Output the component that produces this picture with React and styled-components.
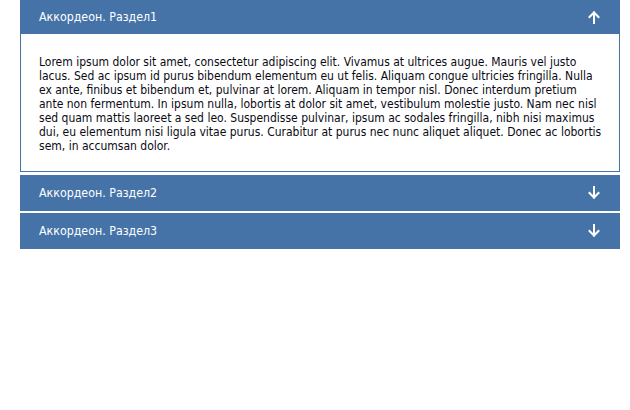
import React, { useState } from "react";
import styled, { createGlobalStyle } from "styled-components";

const GlobalStyle = createGlobalStyle`
  body {
    margin: 0;
    background: #ffffff;
    font-family: "DejaVu Sans Condensed", "DejaVu Sans", sans-serif;
  }
`;

const sections = [
  {
    title: "Аккордеон. Раздел1",
    text: "Lorem ipsum dolor sit amet, consectetur adipiscing elit. Vivamus at ultrices augue. Mauris vel justo lacus. Sed ac ipsum id purus bibendum elementum eu ut felis. Aliquam congue ultricies fringilla. Nulla ex ante, finibus et bibendum et, pulvinar at lorem. Aliquam in tempor nisl. Donec interdum pretium ante non fermentum. In ipsum nulla, lobortis at dolor sit amet, vestibulum molestie justo. Nam nec nisl sed quam mattis laoreet a sed leo. Suspendisse pulvinar, ipsum ac sodales fringilla, nibh nisi maximus dui, eu elementum nisi ligula vitae purus. Curabitur at purus nec nunc aliquet aliquet. Donec ac lobortis sem, in accumsan dolor.",
  },
  { title: "Аккордеон. Раздел2", text: "" },
  { title: "Аккордеон. Раздел3", text: "" },
];

const Arrow = ({ up }) => (
  <svg width="14" height="14" viewBox="0 0 14 14" fill="none">
    <g
      stroke="#ffffff"
      strokeWidth="2"
      strokeLinecap="square"
      transform={up ? undefined : "rotate(180 7 7)"}
    >
      <path d="M7 2.5V13" />
      <path d="M2.5 7L7 2.5L11.5 7" />
    </g>
  </svg>
);

const App = () => {
  const [open, setOpen] = useState(0);

  return (
    <>
      <GlobalStyle />
      <Wrapper>
        {sections.map((s, i) => (
          <Section key={i}>
            <Header $first={i === 0} onClick={() => setOpen(open === i ? -1 : i)}>
              <Title>{s.title}</Title>
              <Arrow up={open === i} />
            </Header>
            {open === i && <Panel>{s.text}</Panel>}
          </Section>
        ))}
      </Wrapper>
    </>
  );
};

const Wrapper = styled.div`
  width: 600px;
  margin: 0 20px;
  display: flex;
  flex-direction: column;
  gap: 2px;
`;

const Section = styled.div`
  display: flex;
  flex-direction: column;
`;

const Header = styled.div`
  height: ${(p) => (p.$first ? "34px" : "36px")};
  padding: 0 19px;
  background: #4573a8;
  display: flex;
  align-items: center;
  justify-content: space-between;
  cursor: pointer;
`;

const Title = styled.span`
  color: #ffffff;
  font-size: 12.3px;
`;

const Panel = styled.div`
  border: 1px solid #4573a8;
  border-top: none;
  padding: 21px 16px 18px 18px;
  font-size: 12px;
  line-height: 14px;
  color: #0a0a14;
  margin-bottom: 1px;
`;

export default App;
